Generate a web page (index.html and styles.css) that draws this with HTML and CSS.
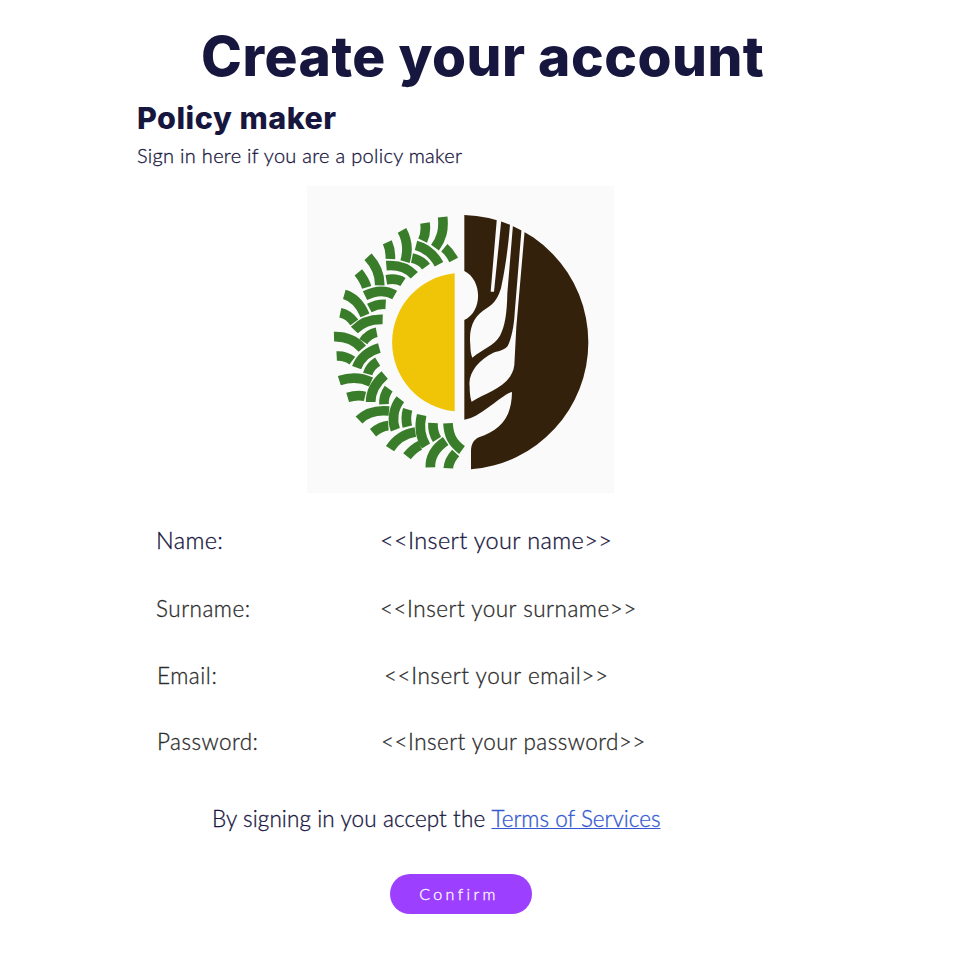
FILE: index.html
```html
<!DOCTYPE html>
<html lang="en">
<head>
<meta charset="utf-8">
<title>Create your account</title>
<link rel="stylesheet" href="styles.css">
</head>
<body>
<main class="page">
  <h1 class="title">Create your account</h1>
  <h2 class="role">Policy maker</h2>
  <p class="intro">Sign in here if you are a policy maker</p>
  <svg class="logo" viewBox="307 186 307 307" aria-hidden="true">
    <rect x="307" y="186" width="307" height="307" fill="#fafafa"/>
    <g transform="translate(300 180) scale(.33333)">
      <g fill="none" stroke="#397d2a" stroke-width="29">
        <path d="M428 111C432 150 425 175 405 203M375 129C378 150 376 165 368 182M348 196C380 204 402 225 417 253M433 203C445 213 453 224 461 240"/>
        <path d="M306 151C322 180 324 215 315 245M262 187C270 205 272 220 271 237M259 257C295 254 325 266 343 286M336 234C355 238 368 246 378 260"/>
        <path d="M204 230C230 258 240 285 239 316M175 277C188 293 195 305 200 322M195 347C225 332 255 328 284 345M259 299C277 296 295 297 309 306"/>
        <path d="M133 343C165 352 182 375 195 406M121 398C140 402 153 413 163 427M163 450C185 427 215 417 248 418M208 384C225 375 240 372 257 373"/>
        <path d="M102 470C140 469 165 480 187 506M190 485C200 470 215 460 230 457"/>
        <g transform="translate(0 465)">
          <path d="M110 63C130 62 145 68 157 77M170 98C180 70 205 48 238 39M203 117C208 100 220 88 233 80"/>
          <path d="M118 137C155 125 185 128 213 141M143 187C160 182 178 180 195 184M212 201C212 170 225 145 254 120M252 208C251 190 256 175 266 161"/>
          <path d="M177 255C200 232 235 225 267 228M219 293C235 280 250 273 265 272M286 284C275 255 280 220 301 193M322 275C318 258 318 240 323 223"/>
          <path d="M270 341C290 310 315 296 346 291M321 364C332 350 345 338 360 331M378 333C360 305 358 270 365 240M411 313C401 297 398 280 399 264"/>
          <path d="M391 397C390 365 405 340 437 318M445 400C446 380 455 367 467 354M486 345C455 322 446 300 444 265"/>
        </g>
      </g>
      <path d="M464 280A208 208 0 0 0 464 694Z" fill="#f0c508"/>
      <g transform="translate(465 0)">
        <path d="M28 105A382 382 0 0 1 400 487A382 382 0 0 1 48 868V815C48 790 58 778 72 772C130 750 170 720 171 636C145 640 75 715 28 719V420C83 395 83 300 28 273Z" fill="#34210c"/>
        <g fill="#fafafa">
          <path d="M127 100L107 335H117L141 100Z"/>
          <path d="M167 110C158 230 145 290 138 325C130 350 120 370 95 385C60 405 40 440 46 495C46 510 48 525 52 533C85 505 115 500 135 467C150 440 156 400 157 340L176 110Z"/>
          <path d="M201 130L179 400C177 440 168 480 158 498C149 509 140 511 115 518C70 540 38 580 44 620C44 645 48 660 50 665C95 635 170 620 178 555L184 440L211 130Z"/>
        </g>
      </g>
    </g>
  </svg>
  <dl class="fields">
    <div class="field field-name"><dt>Name:</dt><dd>&lt;&lt;Insert your name&gt;&gt;</dd></div>
    <div class="field field-surname"><dt>Surname:</dt><dd>&lt;&lt;Insert your surname&gt;&gt;</dd></div>
    <div class="field field-email"><dt>Email:</dt><dd>&lt;&lt;Insert your email&gt;&gt;</dd></div>
    <div class="field field-password"><dt>Password:</dt><dd>&lt;&lt;Insert your password&gt;&gt;</dd></div>
  </dl>
  <p class="terms">By signing in you accept the <a href="#">Terms of Services</a></p>
  <button class="confirm" type="button">Confirm</button>
</main>
</body>
</html>
```
FILE: styles.css
```css
* { box-sizing: border-box; margin: 0; padding: 0; }
body {
  background: #fff;
  color: #17163e;
  font-family: Lato, sans-serif;
  font-weight: 300;
  -webkit-text-stroke: 0.3px currentColor;
}
.page {
  width: 970px;
  height: 958px;
  display: flex;
  flex-direction: column;
  align-items: flex-start;
  white-space: nowrap;
  overflow: hidden;
}
.title, .role {
  font-family: Inter, sans-serif;
  font-weight: 800;
  -webkit-text-stroke: 0;
}
.title {
  margin: 20px 0 0 201px;
  font-size: 55px;
  line-height: 72px;
  letter-spacing: 0.5px;
}
.role {
  margin: 6px 0 0 137px;
  font-size: 30.5px;
  line-height: 40px;
  letter-spacing: 0.5px;
}
.intro {
  margin: 3px 0 0 137px;
  font-size: 20px;
  line-height: 28px;
  letter-spacing: 0.29px;
}
.logo {
  display: block;
  width: 307px;
  height: 307px;
  margin: 17px 0 0 307px;
}
.fields { margin: 30px 0 0 156px; }
.field {
  display: grid;
  grid-template-columns: 224px auto;
  height: 67px;
  font-size: 22.5px;
  line-height: 34px;
  letter-spacing: 0.5px;
  color: #2b2b2b;
}
.field-name { height: 69px; font-size: 23.5px; letter-spacing: 0.36px; color: #17163e; }
.field-email { height: 66px; padding-left: 1px; grid-template-columns: 227px auto; letter-spacing: 0.55px; }
.field-password { height: 34px; padding-left: 1px; letter-spacing: 0.45px; }
.terms {
  margin: 43px 0 0 212px;
  font-size: 22.5px;
  line-height: 34px;
  letter-spacing: 0.1px;
}
.terms a {
  color: #3257d1;
  letter-spacing: 0;
  text-decoration-thickness: 1px;
  text-underline-offset: 1px;
}
.confirm {
  width: 142px;
  height: 40px;
  margin: 38px 0 0 390px;
  padding: 0 4px 1px 0;
  border: 0;
  border-radius: 20px;
  background: #9d3fff;
  color: #fff;
  font: 300 16px/38px Lato, sans-serif;
  letter-spacing: 3.4px;
}
```
